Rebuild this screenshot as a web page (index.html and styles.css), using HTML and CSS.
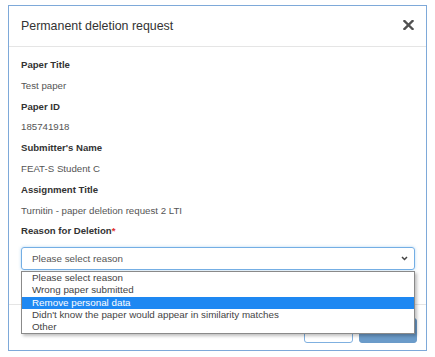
FILE: index.html
```html
<!DOCTYPE html>
<html lang="en">
<head>
    <meta charset="UTF-8">
    <meta name="viewport" content="width=device-width, initial-scale=1.0">
    <title>Permanent deletion request</title>
    <link rel="stylesheet" href="styles.css">
</head>
<body>

    <div class="modal">
        <div class="modal-header">
            <h4 class="modal-title">Permanent deletion request</h4>
            <button class="close" aria-label="Close">
                <svg width="11" height="10" viewBox="0 0 11 10">
                    <path d="M1.5 1 L9.5 9 M9.5 1 L1.5 9" stroke="#505050" stroke-width="2.4" stroke-linecap="square"/>
                </svg>
            </button>
        </div>

        <div class="modal-body">
            <p class="field-label">Paper Title</p>
            <p class="field-value">Test paper</p>
            <p class="field-label">Paper ID</p>
            <p class="field-value">185741918</p>
            <p class="field-label">Submitter's Name</p>
            <p class="field-value">FEAT-S Student C</p>
            <p class="field-label">Assignment Title</p>
            <p class="field-value">Turnitin - paper deletion request 2 LTI</p>
            <p class="field-label">Reason for Deletion<span class="required">*</span></p>

            <div class="select-wrap">
                <div class="select">
                    <span>Please select reason</span>
                    <svg width="7" height="5" viewBox="0 0 7 5">
                        <path d="M1 1 L3.5 3.5 L6 1" fill="none" stroke="#444" stroke-width="1.5"/>
                    </svg>
                </div>
                <ul class="select-options">
                    <li>Please select reason</li>
                    <li>Wrong paper submitted</li>
                    <li class="active">Remove personal data</li>
                    <li>Didn't know the paper would appear in similarity matches</li>
                    <li>Other</li>
                </ul>
            </div>
        </div>

        <div class="modal-footer">
            <button class="btn btn-default">Cancel</button>
            <button class="btn btn-primary" disabled>Submit</button>
        </div>
    </div>

</body>
</html>
```

FILE: styles.css
```css
* {
    box-sizing: border-box;
    margin: 0;
    padding: 0;
    font-family: 'Liberation Sans', Arial, sans-serif;
}

body {
    background: #fff;
    color: #333;
}

.modal {
    width: 419px;
    margin: 5px 0 0 8px;
    border: 1px solid #7ea9d9;
    background: #fff;
}

.modal-header {
    height: 41px;
    padding: 0 12px;
    border-bottom: 1px solid #e5e5e5;
    display: flex;
    align-items: center;
    justify-content: space-between;
}

.modal-title {
    font-size: 12.4px;
    font-weight: normal;
    color: #333;
    margin-top: -1px;
}

.close {
    background: none;
    border: none;
    display: flex;
    margin-top: -3px;
}

.modal-body {
    padding: 8px 11px 34px 12px;
}

.field-label,
.field-value {
    line-height: 20.8px;
}

.field-label {
    font-size: 9.6px;
    font-weight: bold;
    color: #333;
}

.field-value {
    font-size: 9.7px;
    color: #555;
}

.required {
    color: #e03030;
}

.select-wrap {
    position: relative;
    margin-top: 5px;
}

.select {
    height: 23px;
    padding: 0 6px 0 10px;
    border: 1px solid #74aee4;
    border-radius: 3px;
    box-shadow: 0 0 3px rgba(102, 175, 233, 0.5);
    display: flex;
    align-items: center;
    justify-content: space-between;
    font-size: 9.8px;
    color: #555;
}

.select-options {
    position: absolute;
    top: 24px;
    left: 0;
    right: 0;
    list-style: none;
    background: #fff;
    border: 1px solid #8a8a8a;
    box-shadow: 2px 2px 3px rgba(0, 0, 0, 0.25);
}

.select-options li {
    height: 12.2px;
    line-height: 12.2px;
    padding-left: 10px;
    font-size: 9.8px;
    color: #444;
    white-space: nowrap;
}

.select-options li.active {
    background: #1e88f2;
    color: #fff;
}

.modal-footer {
    border-top: 1px solid #e5e5e5;
    padding: 13px 9px 7px;
    display: flex;
    justify-content: flex-end;
    gap: 6px;
}

.btn {
    height: 25px;
    border-radius: 3px;
    font-size: 9.6px;
    line-height: 16px;
    padding: 0 10px;
}

.btn-default {
    width: 49px;
    background: #fff;
    border: 1px solid #7fb0e0;
    color: #337ab7;
}

.btn-primary {
    width: 58px;
    background: #6b9bc9;
    border: 1px solid #6b9bc9;
    color: #fff;
}
```
